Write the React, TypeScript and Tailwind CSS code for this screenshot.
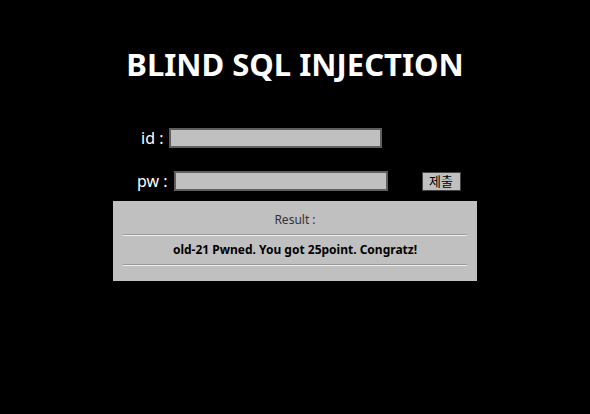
export default function App() {
  return (
    <div
      className="min-h-[414px] bg-black"
      style={{ fontFamily: '"Noto Sans", "Noto Sans CJK KR", sans-serif' }}
    >
      <h1 className="pt-[44px] text-center text-[31px] font-bold leading-[40px] text-white">
        BLIND SQL INJECTION
      </h1>

      <div className="mt-[44px] flex h-[20px] items-center pl-[141px]">
        <span className="text-[16px] leading-[20px] text-white">id :</span>
        <input
          type="text"
          className="ml-[6px] h-[20px] w-[213px] border-2 border-[#5f5f5f] bg-[#c0c0c0] outline-none"
        />
      </div>

      <div className="mt-[23px] flex h-[20px] items-center pl-[137px]">
        <span className="text-[16px] leading-[20px] text-white">pw :</span>
        <input
          type="text"
          className="ml-[6px] h-[20px] w-[214px] border-2 border-[#5f5f5f] bg-[#c0c0c0] outline-none"
        />
        <button
          type="button"
          className="ml-[34px] h-[19px] w-[39px] border border-[#444] bg-[#c0c0c0] text-[13px] leading-[17px] text-black"
        >
          제출
        </button>
      </div>

      <div className="mx-auto mt-[10px] h-[80px] w-[364px] bg-[#c0c0c0] px-[10px] pt-[11px] text-center">
        <div className="text-[12px] leading-[16px] text-[#333]">Result :</div>
        <div className="mt-[6px] h-[2px] border-t border-b border-t-[#9a9a9a] border-b-[#eeeeee]" />
        <div className="mt-[6px] text-[12px] font-bold leading-[16px] text-black">
          old-21 Pwned. You got 25point. Congratz!
        </div>
        <div className="mt-[6px] h-[2px] border-t border-b border-t-[#9a9a9a] border-b-[#eeeeee]" />
      </div>
    </div>
  );
}
